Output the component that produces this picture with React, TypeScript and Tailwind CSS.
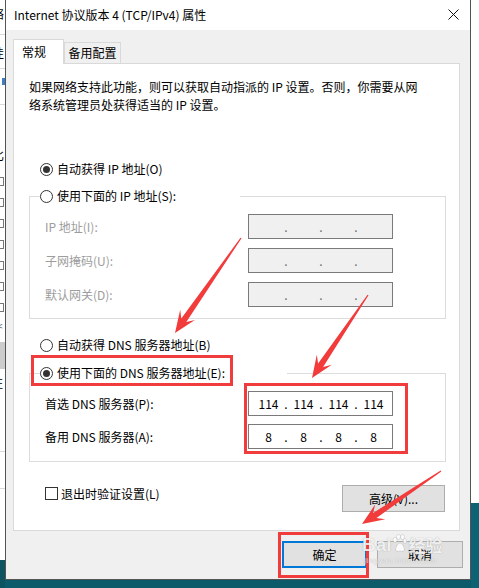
import React from 'react';

// ---- small win32-looking controls ----

const Radio = ({ checked }: { checked?: boolean }) => (
  <span className="flex h-[13px] w-[13px] shrink-0 items-center justify-center rounded-full border border-[#333333] bg-white">
    {checked && <span className="h-[7px] w-[7px] rounded-full bg-[#333333]" />}
  </span>
);

const RadioRow = ({ label, checked }: { label: string; checked?: boolean }) => (
  <div className="flex h-[20px] items-center gap-[4px]">
    <Radio checked={checked} />
    <span className="whitespace-nowrap leading-[20px]">{label}</span>
  </div>
);

interface IpFieldProps {
  values?: string[];
  disabled?: boolean;
}

const IpField = ({ values, disabled }: IpFieldProps) => (
  <div
    className={`flex h-[25px] w-[145px] items-center border border-[#7a7a7a] pl-[4px] leading-[23px] ${
      disabled ? 'bg-[#f0f0f0] text-[#6d6d6d]' : 'bg-white text-black'
    }`}
  >
    {[0, 1, 2, 3].map((i) => (
      <React.Fragment key={i}>
        <span className="w-[31px] text-center">{values ? values[i] : ''}</span>
        {i < 3 && <span className="w-[4px] text-center">.</span>}
      </React.Fragment>
    ))}
  </div>
);

const FieldRow = ({ label, disabled, values }: { label: string; disabled?: boolean; values?: string[] }) => (
  <div className="flex h-[25px] items-center">
    <span className={`ml-[5px] w-[203px] whitespace-nowrap ${disabled ? 'text-[#9d9d9d]' : 'text-black'}`}>{label}</span>
    <IpField values={values} disabled={disabled} />
  </div>
);

const WinButton = ({ children, primary, className = '' }: { children: React.ReactNode; primary?: boolean; className?: string }) => (
  <div
    className={`flex h-[27px] items-center justify-center bg-[#e1e1e1] ${
      primary ? 'border-2 border-[#0078d7]' : 'border border-[#adadad]'
    } ${className}`}
  >
    {children}
  </div>
);

// ---- annotation arrows (baidu jingyan style) ----

function arrowPoints(x1: number, y1: number, x2: number, y2: number, head = 22, headW = 9, shaft = 3) {
  const dx = x2 - x1;
  const dy = y2 - y1;
  const len = Math.hypot(dx, dy);
  const ux = dx / len;
  const uy = dy / len;
  const nx = -uy;
  const ny = ux;
  const bx = x2 - ux * head;
  const by = y2 - uy * head;
  const kx = x2 - ux * head * 0.7;
  const ky = y2 - uy * head * 0.7;
  const p = (x: number, y: number) => `${x.toFixed(1)},${y.toFixed(1)}`;
  return [
    p(x1 + nx * 0.6, y1 + ny * 0.6),
    p(kx + nx * shaft, ky + ny * shaft),
    p(bx + nx * headW, by + ny * headW),
    p(x2, y2),
    p(bx - nx * headW, by - ny * headW),
    p(kx - nx * shaft, ky - ny * shaft),
    p(x1 - nx * 0.6, y1 - ny * 0.6),
  ].join(' ');
}

const Annotations = () => (
  <>
    <div className="pointer-events-none absolute left-[31px] top-[355px] h-[31px] w-[202px] border-[3px] border-[#f03c3c]" />
    <div className="pointer-events-none absolute left-[244px] top-[383px] h-[71px] w-[164px] border-[3px] border-[#f03c3c]" />
    <div className="pointer-events-none absolute left-[278px] top-[532px] h-[46px] w-[91px] border-[3px] border-[#f03c3c]" />

    {/* watermark */}
    <div className="pointer-events-none absolute left-[362px] top-[534px] flex flex-col items-start font-['Liberation_Sans',sans-serif] text-white/85 [text-shadow:0_0_1px_rgba(0,0,0,0.35)]">
      <div className="flex items-end leading-[22px]">
        <span className="text-[19px] font-bold">Bai</span>
        <svg width="15" height="19" viewBox="0 0 15 19" className="mb-[3px] opacity-85">
          <g fill="#ffffff" stroke="rgba(0,0,0,0.25)" strokeWidth="0.5">
            <ellipse cx="3" cy="6" rx="2" ry="2.6" />
            <ellipse cx="6.5" cy="2.8" rx="1.9" ry="2.5" />
            <ellipse cx="10.5" cy="3" rx="1.9" ry="2.5" />
            <ellipse cx="13" cy="7" rx="1.8" ry="2.4" />
            <path d="M3.5 15 Q5 9 8 9 Q11 9 12.5 15 Q12.5 18 8 17 Q3.5 18 3.5 15Z" />
          </g>
        </svg>
        <span className="ml-[2px] font-['Noto_Sans_CJK_SC',sans-serif] text-[17px] font-bold">经验</span>
      </div>
      <span className="ml-[2px] text-[8px] leading-[10px] tracking-[0.5px]">jingyan.baidu.com</span>
    </div>

    <svg className="pointer-events-none absolute left-0 top-0" width="479" height="588">
      <g fill="#f23b3b">
        <polygon points={arrowPoints(241, 238, 175, 333)} />
        <polygon points={arrowPoints(368, 295, 312, 378)} />
        <polygon points={arrowPoints(441, 471, 362, 524)} />
      </g>
    </svg>
  </>
);

// ---- bits of the window behind the dialog ----

const LeftStrip = () => (
  <div className="flex h-full w-[5px] shrink-0 flex-col overflow-hidden">
    <div className="flex h-[560px] flex-col bg-white text-[12px] leading-[16px]">
      <div className="-ml-[8px] mt-[6px] h-[16px] whitespace-nowrap">络</div>
      <div className="mt-[12px] h-px bg-[#dadada]" />
      <div className="-ml-[8px] mt-[10px] h-[16px] whitespace-nowrap">佳</div>
      <div className="mt-[7px] h-px bg-[#dadada]" />
      <div className="ml-[2px] mt-[9px] h-[7px] w-[3px] bg-[#3d7ec4]" />
      <div className="mt-[19px] h-px bg-[#dadada]" />
      <div className="-ml-[8px] mt-[42px] h-[16px] whitespace-nowrap">比</div>
      <div className="mt-[14px] flex flex-col gap-[12px]">
        {[0, 1, 2, 3, 4, 5, 6].map((i) => (
          <div key={i} className="-ml-[5px] h-[9px] w-[9px] border border-[#777777]" />
        ))}
      </div>
      <div className="-ml-[3px] mt-[8px] h-[12px] text-[10px] leading-[12px] text-[#555555]">&lt;</div>
      <div className="mt-[10px] h-[27px] bg-[#cccccc]" />
      <div className="-ml-[9px] mt-[6px] h-[16px] whitespace-nowrap">拄</div>
      <div className="mt-[60px] h-px bg-[#dadada]" />
      <div className="mt-[36px] h-px bg-[#dadada]" />
    </div>
    <div className="flex-1 bg-[#0d5463]" />
  </div>
);

// ---- the dialog ----

const Dialog = () => (
  <div className="flex h-[580px] w-[466px] shrink-0 flex-col border-x border-b border-[#545454] bg-[#f0f0f0]">
    {/* title bar */}
    <div className="flex h-[30px] shrink-0 justify-between bg-white">
      <span className="flex items-center pl-[8px] leading-[30px]">Internet 协议版本 4 (TCP/IPv4) 属性</span>
      <svg width="11" height="11" viewBox="0 0 11 11" className="mr-[11px] mt-[9px]">
        <path d="M0.5 0.5 L10.5 10.5 M10.5 0.5 L0.5 10.5" stroke="#111111" strokeWidth="1" />
      </svg>
    </div>

    <div className="flex flex-col px-[7px] pt-[9px]">
      {/* tabs */}
      <div className="relative z-10 flex h-[24px] items-end">
        <div className="-mb-px flex h-[25px] w-[51px] items-start border border-b-0 border-[#d9d9d9] bg-white pl-[8px] pt-[3px] leading-[17px]">
          常规
        </div>
        <div className="flex h-[21px] w-[57px] items-center justify-center border border-b-0 border-[#d9d9d9] bg-[#f0f0f0]">
          备用配置
        </div>
      </div>

      {/* tab page */}
      <div className="flex h-[468px] w-[447px] flex-col border border-[#d9d9d9] bg-white">
        <p className="pl-[15px] pt-[14px] leading-[18px]">
          如果网络支持此功能，则可以获取自动指派的 IP 设置。否则，你需要从网
          <br />
          络系统管理员处获得适当的 IP 设置。
        </p>

        <div className="ml-[26px] mt-[45px]">
          <RadioRow label="自动获得 IP 地址(O)" checked />
        </div>

        <fieldset className="ml-[15px] mt-[7px] w-[417px] border border-[#dcdcdc] pb-[11px] pl-[10px] pt-[8px]">
          <legend className="w-[200px] bg-white">
            <RadioRow label="使用下面的 IP 地址(S):" />
          </legend>
          <div className="flex flex-col gap-[9px]">
            <FieldRow label="IP 地址(I):" disabled />
            <FieldRow label="子网掩码(U):" disabled />
            <FieldRow label="默认网关(D):" disabled />
          </div>
        </fieldset>

        <div className="ml-[26px] mt-[16px]">
          <RadioRow label="自动获得 DNS 服务器地址(B)" />
        </div>

        <fieldset className="ml-[15px] mt-[8px] w-[417px] border border-[#dcdcdc] pb-[12px] pl-[10px] pt-[8px]">
          <legend className="w-[247px] bg-white">
            <RadioRow label="使用下面的 DNS 服务器地址(E):" checked />
          </legend>
          <div className="flex flex-col gap-[8px]">
            <FieldRow label="首选 DNS 服务器(P):" values={['114', '114', '114', '114']} />
            <FieldRow label="备用 DNS 服务器(A):" values={['8', '8', '8', '8']} />
          </div>
        </fieldset>

        <div className="mt-[23px] flex items-start justify-between pl-[31px] pr-[14px]">
          <div className="flex h-[17px] items-center gap-[3px]">
            <span className="h-[13px] w-[13px] border border-[#333333] bg-white" />
            <span className="whitespace-nowrap">退出时验证设置(L)</span>
          </div>
          <WinButton className="w-[103px]">高级(V)...</WinButton>
        </div>
      </div>

      {/* dialog buttons */}
      <div className="mt-[10px] flex justify-end gap-[10px]">
        <WinButton primary className="w-[85px]">
          确定
        </WinButton>
        <WinButton className="w-[86px]">取消</WinButton>
      </div>
    </div>
  </div>
);

export default function App() {
  return (
    <div className="relative flex h-[588px] w-[479px] items-start overflow-hidden bg-[#0c5b6a] font-['Noto_Sans_CJK_SC','Noto_Sans',sans-serif] text-[12px] text-black">
      <LeftStrip />
      <Dialog />
      <div className="flex h-full w-[8px] shrink-0 flex-col">
        <div className="h-[503px] bg-white" />
        <div className="flex-1 bg-[#0b6373]" />
      </div>
      <Annotations />
    </div>
  );
}
